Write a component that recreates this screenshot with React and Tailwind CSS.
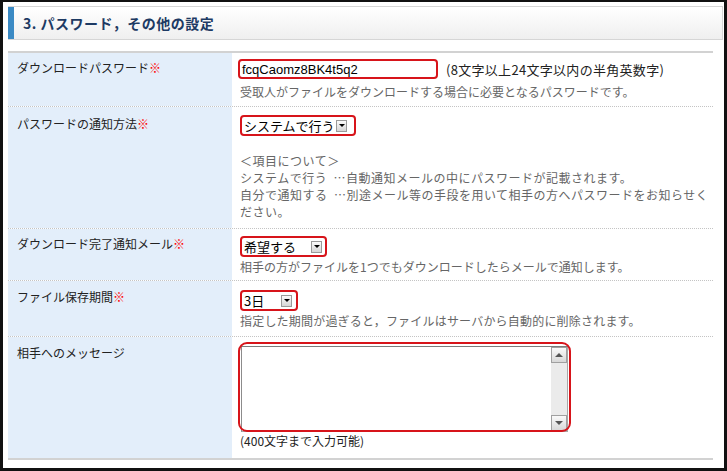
import React from "react";

function Row({ label, req, lp, cp, last, children }) {
  return (
    <div className={"flex " + (last ? "" : "border-b border-dotted border-[#c4c4c4]")}>
      <div className={"w-[224px] shrink-0 bg-[#e3eefa] pl-[9px] text-[#222] " + lp}>
        {label}
        {req && <span className="text-[#ff0000] font-bold">※</span>}
      </div>
      <div className={"flex-1 pl-[8px] " + cp}>{children}</div>
    </div>
  );
}

function Select({ w, pr, text }) {
  return (
    <div className={"h-[21px] border-2 border-[#d7141a] rounded-[4px] flex items-center pl-[2px] bg-white " + w + " " + pr}>
      <span className="flex-1 text-black text-[13px] leading-[15px] whitespace-nowrap">{text}</span>
      <div className="w-[11px] h-[12px] border border-[#9a9a9a] bg-gradient-to-b from-[#fbfbfb] to-[#d6d6d6] flex items-center justify-center">
        <div className="w-0 h-0 border-l-[3px] border-r-[3px] border-t-[3px] border-l-transparent border-r-transparent border-t-black" />
      </div>
    </div>
  );
}

export default function App() {
  return (
    <div className="w-[727px] h-[471px] bg-white border-t-2 border-l-[3px] border-r-[3px] border-b-[3px] border-[#111] pt-[4px] pl-[5px] pr-[1px] font-['Noto_Sans_CJK_JP',sans-serif] text-[12px] leading-[17px] text-[#333] overflow-hidden">
      <div className="h-[34px] flex items-stretch border-t border-r border-b border-[#d6d6d6] bg-gradient-to-b from-white to-[#efefef]">
        <div className="w-[6px] bg-[#3b8ac4]" />
        <div className="pl-[9px] flex items-center text-[14px] font-bold text-[#1d3a63] tracking-[0.5px]">
          3. パスワード，その他の設定
        </div>
      </div>

      <div className="mt-[11px] w-[705px] border-t-2 border-b-2 border-[#d2d2d2]">
        <Row label="ダウンロードパスワード" req lp="pt-[6px]" cp="pt-[6px] pb-[6px]">
          <div className="flex items-center h-[20px]">
            <div className="-ml-[2px] w-[200px] h-[20px] border-2 border-[#d7141a] rounded-[4px] flex items-end pl-[2px] font-['Liberation_Sans',sans-serif] text-[13px] leading-[15px] text-black">
              fcqCaomz8BK4t5q2
            </div>
            <span className="ml-[8px] text-[13px] text-[#222] tracking-[0.3px]">(8文字以上24文字以内の半角英数字)</span>
          </div>
          <div className="mt-[4px] text-[#666]">受取人がファイルをダウンロードする場合に必要となるパスワードです。</div>
        </Row>

        <Row label="パスワードの通知方法" req lp="pt-[8px]" cp="pt-[8px] pb-[8px]">
          <Select w="w-[116px]" pr="pr-[7px]" text="システムで行う" />
          <div className="mt-[16px] text-[#666] tracking-[0.5px]">
            <div>＜項目について＞</div>
            <div>システムで行う&nbsp;&nbsp;…自動通知メールの中にパスワードが記載されます。</div>
            <div>自分で通知する&nbsp;&nbsp;…別途メール等の手段を用いて相手の方へパスワードをお知らせく</div>
            <div>ださい。</div>
          </div>
        </Row>

        <Row label="ダウンロード完了通知メール" req lp="pt-[6px]" cp="pt-[7px] pb-[5px]">
          <Select w="w-[87px]" pr="pr-[3px]" text="希望する" />
          <div className="mt-[1px] text-[#666]">相手の方がファイルを1つでもダウンロードしたらメールで通知します。</div>
        </Row>

        <Row label="ファイル保存期間" req lp="pt-[7px]" cp="pt-[9px] pb-[7px]">
          <Select w="w-[58px]" pr="pr-[4px]" text="3日" />
          <div className="mt-[1px] text-[#666] tracking-[0.2px]">指定した期間が過ぎると，ファイルはサーバから自動的に削除されます。</div>
        </Row>

        <Row label="相手へのメッセージ" lp="pt-[7px]" cp="pt-[9px] pb-[9px]" last>
          <div className="relative ml-[1px] w-[327px] h-[86px] border border-[#a8a8a8] border-t-[#7c7c7c] border-l-[#8c8c8c] bg-white flex justify-end">
            <div className="w-[16px] h-full flex flex-col bg-[#ebebeb]">
              <div className="h-[16px] border border-[#a0a0a0] bg-gradient-to-b from-[#fafafa] to-[#d8d8d8] flex items-center justify-center">
                <div className="w-0 h-0 border-l-[4px] border-r-[4px] border-b-[4px] border-l-transparent border-r-transparent border-b-[#555]" />
              </div>
              <div className="flex-1" />
              <div className="h-[16px] border border-[#a0a0a0] bg-gradient-to-b from-[#fafafa] to-[#d8d8d8] flex items-center justify-center">
                <div className="w-0 h-0 border-l-[4px] border-r-[4px] border-t-[4px] border-l-transparent border-r-transparent border-t-[#555]" />
              </div>
            </div>
            <div className="absolute -left-[4px] -top-[5px] w-[333px] h-[90px] border-2 border-[#d7141a] rounded-[9px]" />
          </div>
          <div className="text-[#222]">(400文字まで入力可能)</div>
        </Row>
      </div>
    </div>
  );
}
